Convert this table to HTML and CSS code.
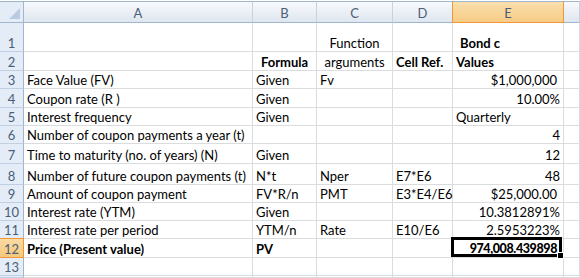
FILE: index.html
```html
<!DOCTYPE html>
<html>
<head>
<meta charset="utf-8">
<link rel="stylesheet" href="styles.css">
</head>
<body>
<div class="sheet">
  <div class="hd corner"><span class="tri"></span></div>
  <div class="hd">A</div>
  <div class="hd">B</div>
  <div class="hd">C</div>
  <div class="hd">D</div>
  <div class="hd sel">E</div>
  <div class="hd"></div>

  <div class="rh">1</div>
  <div class="c"></div>
  <div class="c"></div>
  <div class="c ctr">Function</div>
  <div class="c"></div>
  <div class="c b ind">Bond c</div>
  <div class="c"></div>

  <div class="rh">2</div>
  <div class="c"></div>
  <div class="c b ctr">Formula</div>
  <div class="c ctr">arguments</div>
  <div class="c b">Cell Ref.</div>
  <div class="c b">Values</div>
  <div class="c"></div>

  <div class="rh">3</div>
  <div class="c">Face Value (FV)</div>
  <div class="c">Given</div>
  <div class="c">Fv</div>
  <div class="c"></div>
  <div class="c r acc">$1,000,000</div>
  <div class="c"></div>

  <div class="rh">4</div>
  <div class="c">Coupon rate (R )</div>
  <div class="c">Given</div>
  <div class="c"></div>
  <div class="c"></div>
  <div class="c r">10.00%</div>
  <div class="c"></div>

  <div class="rh">5</div>
  <div class="c">Interest frequency</div>
  <div class="c">Given</div>
  <div class="c"></div>
  <div class="c"></div>
  <div class="c">Quarterly</div>
  <div class="c"></div>

  <div class="rh">6</div>
  <div class="c">Number of coupon payments a year (t)</div>
  <div class="c"></div>
  <div class="c"></div>
  <div class="c"></div>
  <div class="c r">4</div>
  <div class="c"></div>

  <div class="rh">7</div>
  <div class="c">Time to maturity (no. of years) (N)</div>
  <div class="c">Given</div>
  <div class="c"></div>
  <div class="c"></div>
  <div class="c r">12</div>
  <div class="c"></div>

  <div class="rh">8</div>
  <div class="c">Number of future coupon payments (t)</div>
  <div class="c">N*t</div>
  <div class="c">Nper</div>
  <div class="c">E7*E6</div>
  <div class="c r">48</div>
  <div class="c"></div>

  <div class="rh">9</div>
  <div class="c">Amount of coupon payment</div>
  <div class="c">FV*R/n</div>
  <div class="c">PMT</div>
  <div class="c">E3*E4/E6</div>
  <div class="c r acc">$25,000.00</div>
  <div class="c"></div>

  <div class="rh">10</div>
  <div class="c">Interest rate (YTM)</div>
  <div class="c">Given</div>
  <div class="c"></div>
  <div class="c"></div>
  <div class="c r">10.3812891%</div>
  <div class="c"></div>

  <div class="rh">11</div>
  <div class="c">Interest rate per period</div>
  <div class="c">YTM/n</div>
  <div class="c">Rate</div>
  <div class="c">E10/E6</div>
  <div class="c r">2.5953223%</div>
  <div class="c"></div>

  <div class="rh sel">12</div>
  <div class="c b">Price (Present value)</div>
  <div class="c b">PV</div>
  <div class="c"></div>
  <div class="c"></div>
  <div class="c r b active">974,008.439898</div>
  <div class="c"></div>

  <div class="rh">13</div>
  <div class="c"></div>
  <div class="c"></div>
  <div class="c"></div>
  <div class="c"></div>
  <div class="c"></div>
  <div class="c"></div>

  <div class="rh"></div>
  <div class="c"></div>
  <div class="c"></div>
  <div class="c"></div>
  <div class="c"></div>
  <div class="c"></div>
  <div class="c"></div>

  <div class="selbox"><span class="handle"></span></div>
</div>
</body>
</html>
```

FILE: styles.css
```css
html, body {
  margin: 0;
  padding: 0;
  background: #ffffff;
}

.sheet {
  position: relative;
  width: 580px;
  height: 278px;
  overflow: hidden;
  padding-top: 1px;
  box-sizing: border-box;
  display: grid;
  grid-template-columns: 24px 229px 64px 76px 60px 111px 1fr;
  grid-template-rows: 22px 29px 19px 18px 19px 18px 18px 20px 21px 18px 18px 18px 19px 18px 1fr;
  font-family: "Lato", "Liberation Sans", sans-serif;
  font-size: 13px;
  color: #000;
  background: #fff;
}

.hd {
  box-sizing: border-box;
  border-top: 1px solid #9eb6ce;
  border-right: 1px solid #c5d2e0;
  border-bottom: 1px solid #9eb6ce;
  background: linear-gradient(#f7f9fc, #dfe6ef);
  color: #4a5e76;
  display: flex;
  align-items: center;
  justify-content: center;
  padding-top: 2px;
  font-size: 13px;
}

.hd.corner {
  border-right: 1px solid #9eb6ce;
  background: #e4ecf7;
  position: relative;
  padding: 0;
}

.corner .tri {
  position: absolute;
  right: 3px;
  bottom: 3px;
  width: 0;
  height: 0;
  border-left: 11px solid transparent;
  border-bottom: 11px solid #b9cbe1;
}

.hd.sel {
  background: linear-gradient(#fadfae, #f6cc85);
  border-right: 1px solid #f29536;
  border-left: 1px solid #f29536;
  border-bottom: 1px solid #f29536;
  margin-left: -1px;
  color: #4a5e76;
}

.rh {
  box-sizing: border-box;
  border-right: 1px solid #9eb6ce;
  border-bottom: 1px solid #c0cfe1;
  background: #e4ecf7;
  color: #4a5e76;
  display: flex;
  align-items: flex-end;
  justify-content: center;
  line-height: 16px;
}

.rh.sel {
  background: linear-gradient(#f9dba4, #f5c77c);
  border-bottom: 1px solid #f29536;
  border-right: 1px solid #f29536;
  border-top: 1px solid #f29536;
  margin-top: -1px;
}

.c {
  box-sizing: border-box;
  border-right: 1px solid #dadcdd;
  border-bottom: 1px solid #dadcdd;
  display: flex;
  align-items: flex-end;
  padding: 0 3px 0 3px;
  line-height: 16px;
  white-space: nowrap;
  overflow: visible;
}

.c.b { font-weight: bold; }
.c.ctr { justify-content: center; }
.c.r { justify-content: flex-end; }
.c.acc { padding-right: 6px; }
.c.ind { padding-left: 7px; }
.c.active {
  padding-right: 6px;
  font-size: 12.5px;
  font-weight: 900;
  letter-spacing: -0.4px;
}

.selbox {
  position: absolute;
  left: 451px;
  top: 237px;
  width: 111px;
  height: 20px;
  box-sizing: border-box;
  border: 3px solid #000;
  pointer-events: none;
}

.selbox .handle {
  position: absolute;
  right: -5px;
  bottom: -5px;
  width: 5px;
  height: 5px;
  background: #000;
  border: 1px solid #fff;
}
```
